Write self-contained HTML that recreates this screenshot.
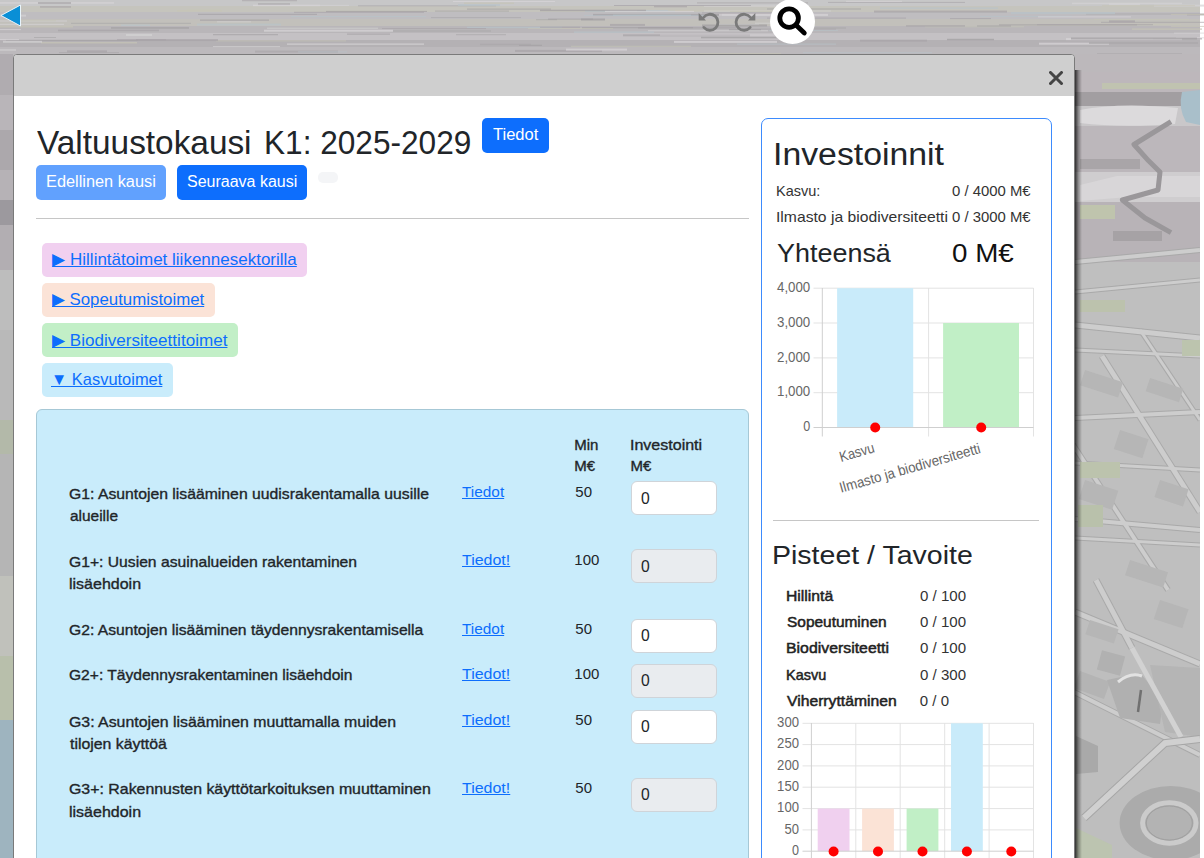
<!DOCTYPE html>
<html><head><meta charset="utf-8">
<style>
*{box-sizing:border-box;margin:0;padding:0}
html,body{width:1204px;height:858px;overflow:hidden}
body{font-family:"Liberation Sans",sans-serif;color:#212529;position:relative;background:#b4b2b4}
.a{position:absolute;white-space:nowrap}
.tx{position:absolute;white-space:nowrap;line-height:1}
#map{position:absolute;left:0;top:0;width:1204px;height:858px}
#modal{position:absolute;left:13px;top:54px;width:1062px;height:820px;background:#fff;border:1px solid #7a7a7a;border-radius:4px 4px 0 0;box-shadow:none}
#mhead{position:absolute;left:0;top:0;width:1060px;height:41px;background:#cfcfcf;border-radius:3px 3px 0 0}
.btn{position:absolute;border-radius:5px}
.acc{position:absolute;left:42px;height:34px;border-radius:5px}
#tbl{position:absolute;left:36px;top:409px;width:713px;height:470px;background:#c9ecfb;border:1px solid #a6c8d6;border-radius:6px}
.inp{position:absolute;left:631px;width:86px;height:34.3px;background:#fff;border:1px solid #cfd4d9;border-radius:6px}
.inp.d{background:#e9ecef}
.inp span{position:absolute;left:10px;top:7px;font-size:15px;line-height:20px;color:#212529}
#panel{position:absolute;left:761px;top:118px;width:291px;height:760px;border:1px solid #3d8bfd;border-radius:7px}
svg.ov{position:absolute;left:0;top:0}
</style></head><body>
<svg style="position:absolute;left:0;top:0" width="1204" height="858" viewBox="0 0 1204 858">
<defs><clipPath id="rc"><rect x="1075" y="54" width="125" height="804"/></clipPath></defs>
<rect x="0" y="0" width="1204" height="858" fill="#fff"/>
<rect x="0" y="0" width="1200" height="858" fill="#bdbbbd"/>
<rect x="0" y="0" width="1200" height="6" fill="#c7c7c8"/>
<rect x="0" y="6" width="1200" height="6" fill="#c5c4bd"/>
<rect x="0" y="12" width="1200" height="7" fill="#bfbdc0"/>
<rect x="0" y="19" width="1200" height="7" fill="#c2c0bb"/>
<rect x="0" y="26" width="1200" height="7" fill="#b9b6b9"/>
<rect x="0" y="33" width="1200" height="7" fill="#c4c1c4"/>
<rect x="0" y="40" width="1200" height="7" fill="#b4b1b4"/>
<rect x="0" y="47" width="1200" height="7" fill="#bcb9bc"/>
<rect x="515" y="49.9" width="87" height="2" fill="#a6a3a6" opacity="0.7"/>
<rect x="585" y="10.0" width="90" height="2" fill="#b8c3c9" opacity="0.7"/>
<rect x="717" y="24.1" width="42" height="1" fill="#d4d3d4" opacity="0.7"/>
<rect x="623" y="34.3" width="127" height="2" fill="#a6a3a6" opacity="0.7"/>
<rect x="767" y="8.5" width="94" height="1" fill="#9f9c9f" opacity="0.7"/>
<rect x="610" y="10.3" width="27" height="1" fill="#d8d6d8" opacity="0.7"/>
<rect x="-12" y="23.8" width="76" height="1" fill="#d8d6d8" opacity="0.7"/>
<rect x="242" y="0.2" width="55" height="1" fill="#a6a3a6" opacity="0.7"/>
<rect x="769" y="29.8" width="69" height="1" fill="#b8c3c9" opacity="0.7"/>
<rect x="267" y="27.7" width="111" height="1" fill="#d4d3d4" opacity="0.7"/>
<rect x="654" y="5.8" width="33" height="1.5" fill="#a6a3a6" opacity="0.7"/>
<rect x="34" y="37.0" width="22" height="1" fill="#aaa7aa" opacity="0.7"/>
<rect x="1109" y="20.3" width="26" height="2" fill="#a6a3a6" opacity="0.7"/>
<rect x="41" y="42.0" width="96" height="1.5" fill="#c6c5b6" opacity="0.7"/>
<rect x="59" y="52.1" width="60" height="1" fill="#aaa7aa" opacity="0.7"/>
<rect x="258" y="3.2" width="32" height="2" fill="#aaa7aa" opacity="0.7"/>
<rect x="803" y="27.5" width="43" height="1" fill="#a6a3a6" opacity="0.7"/>
<rect x="755" y="22.7" width="34" height="1" fill="#d4d3d4" opacity="0.7"/>
<rect x="287" y="43.4" width="137" height="1.5" fill="#d4d3d4" opacity="0.7"/>
<rect x="213" y="46.1" width="67" height="1" fill="#d4d3d4" opacity="0.7"/>
<rect x="1187" y="13.9" width="46" height="1.5" fill="#9f9c9f" opacity="0.7"/>
<rect x="320" y="4.9" width="29" height="1" fill="#d4d3d4" opacity="0.7"/>
<rect x="702" y="24.5" width="65" height="2" fill="#9f9c9f" opacity="0.7"/>
<rect x="668" y="9.9" width="124" height="1" fill="#c6c5b6" opacity="0.7"/>
<rect x="1086" y="13.5" width="118" height="1" fill="#aaa7aa" opacity="0.7"/>
<rect x="874" y="10.6" width="133" height="2" fill="#a6a3a6" opacity="0.7"/>
<rect x="704" y="5.6" width="71" height="1" fill="#d8d6d8" opacity="0.7"/>
<rect x="1153" y="38.0" width="49" height="1.5" fill="#a6a3a6" opacity="0.7"/>
<rect x="980" y="15.8" width="92" height="1" fill="#b8c3c9" opacity="0.7"/>
<rect x="1171" y="25.9" width="35" height="1" fill="#c6c5b6" opacity="0.7"/>
<rect x="216" y="40.4" width="130" height="1" fill="#c6c5b6" opacity="0.7"/>
<rect x="464" y="2.5" width="50" height="1.5" fill="#c6c5b6" opacity="0.7"/>
<rect x="614" y="5.0" width="137" height="1" fill="#a6a3a6" opacity="0.7"/>
<rect x="1176" y="37.3" width="99" height="1" fill="#d8d6d8" opacity="0.7"/>
<rect x="-6" y="49.2" width="22" height="1.5" fill="#d4d3d4" opacity="0.7"/>
<rect x="-23" y="26.0" width="96" height="1.5" fill="#c6c5b6" opacity="0.7"/>
<rect x="121" y="24.5" width="29" height="1.5" fill="#b8c3c9" opacity="0.7"/>
<rect x="6" y="39.8" width="132" height="1" fill="#9f9c9f" opacity="0.7"/>
<rect x="1154" y="4.6" width="61" height="2" fill="#d4d3d4" opacity="0.7"/>
<rect x="1039" y="42.7" width="70" height="2" fill="#d8d6d8" opacity="0.7"/>
<rect x="-32" y="20.5" width="99" height="1" fill="#d8d6d8" opacity="0.7"/>
<rect x="40" y="6.2" width="31" height="1.5" fill="#a6a3a6" opacity="0.7"/>
<rect x="860" y="39.7" width="67" height="2" fill="#a6a3a6" opacity="0.7"/>
<rect x="528" y="28.0" width="85" height="1" fill="#c6c5b6" opacity="0.7"/>
<rect x="702" y="12.4" width="78" height="1" fill="#a6a3a6" opacity="0.7"/>
<rect x="925" y="26.3" width="99" height="1" fill="#c6c5b6" opacity="0.7"/>
<rect x="326" y="10.9" width="101" height="1" fill="#9f9c9f" opacity="0.7"/>
<rect x="1082" y="23.9" width="99" height="1" fill="#c6c5b6" opacity="0.7"/>
<rect x="456" y="34.2" width="50" height="1" fill="#aaa7aa" opacity="0.7"/>
<rect x="431" y="17.1" width="90" height="1" fill="#aaa7aa" opacity="0.7"/>
<rect x="571" y="45.8" width="120" height="1" fill="#c6c5b6" opacity="0.7"/>
<rect x="977" y="25.5" width="34" height="1" fill="#9f9c9f" opacity="0.7"/>
<rect x="467" y="26.7" width="95" height="1.5" fill="#b8c3c9" opacity="0.7"/>
<rect x="999" y="24.4" width="138" height="1" fill="#9f9c9f" opacity="0.7"/>
<rect x="-11" y="2.2" width="125" height="1.5" fill="#d8d6d8" opacity="0.7"/>
<rect x="393" y="30.5" width="98" height="1" fill="#a6a3a6" opacity="0.7"/>
<rect x="519" y="44.8" width="23" height="1" fill="#9f9c9f" opacity="0.7"/>
<rect x="126" y="34.0" width="26" height="2" fill="#d4d3d4" opacity="0.7"/>
<rect x="737" y="43.6" width="99" height="1" fill="#b8c3c9" opacity="0.7"/>
<rect x="198" y="13.8" width="119" height="1" fill="#9f9c9f" opacity="0.7"/>
<rect x="540" y="9.7" width="106" height="1.5" fill="#9f9c9f" opacity="0.7"/>
<rect x="382" y="28.1" width="104" height="1" fill="#a6a3a6" opacity="0.7"/>
<rect x="1011" y="12.1" width="104" height="2" fill="#b8c3c9" opacity="0.7"/>
<rect x="435" y="10.6" width="74" height="1" fill="#a6a3a6" opacity="0.7"/>
<rect x="638" y="27.1" width="98" height="1.5" fill="#a6a3a6" opacity="0.7"/>
<rect x="358" y="5.3" width="138" height="1" fill="#aaa7aa" opacity="0.7"/>
<rect x="253" y="4.7" width="67" height="1.5" fill="#d8d6d8" opacity="0.7"/>
<rect x="1171" y="14.1" width="132" height="1" fill="#c6c5b6" opacity="0.7"/>
<rect x="581" y="18.5" width="24" height="2" fill="#9f9c9f" opacity="0.7"/>
<rect x="294" y="11.8" width="130" height="1" fill="#a6a3a6" opacity="0.7"/>
<rect x="950" y="18.1" width="41" height="1" fill="#a6a3a6" opacity="0.7"/>
<rect x="136" y="39.1" width="82" height="2" fill="#a6a3a6" opacity="0.7"/>
<rect x="674" y="40.9" width="103" height="2" fill="#d8d6d8" opacity="0.7"/>
<rect x="648" y="30.3" width="120" height="1" fill="#d8d6d8" opacity="0.7"/>
<rect x="593" y="13.9" width="129" height="2" fill="#9f9c9f" opacity="0.7"/>
<rect x="1038" y="16.4" width="93" height="1" fill="#d8d6d8" opacity="0.7"/>
<rect x="605" y="10.9" width="89" height="1" fill="#d8d6d8" opacity="0.7"/>
<rect x="-44" y="29.1" width="65" height="1" fill="#d8d6d8" opacity="0.7"/>
<rect x="1097" y="53.4" width="85" height="1" fill="#a6a3a6" opacity="0.7"/>
<rect x="67" y="50.3" width="40" height="2" fill="#a6a3a6" opacity="0.7"/>
<rect x="1101" y="21.8" width="116" height="1" fill="#a6a3a6" opacity="0.7"/>
<rect x="566" y="48.6" width="61" height="2" fill="#d8d6d8" opacity="0.7"/>
<rect x="347" y="33.4" width="43" height="1.5" fill="#aaa7aa" opacity="0.7"/>
<rect x="828" y="1.9" width="137" height="1" fill="#aaa7aa" opacity="0.7"/>
<rect x="-35" y="39.1" width="54" height="1" fill="#d8d6d8" opacity="0.7"/>
<rect x="574" y="31.4" width="80" height="1.5" fill="#b8c3c9" opacity="0.7"/>
<rect x="197" y="23.6" width="84" height="2" fill="#b8c3c9" opacity="0.7"/>
<rect x="467" y="8.6" width="84" height="1" fill="#9f9c9f" opacity="0.7"/>
<rect x="739" y="28.6" width="97" height="1" fill="#aaa7aa" opacity="0.7"/>
<rect x="1094" y="18.8" width="95" height="1" fill="#c6c5b6" opacity="0.7"/>
<rect x="704" y="10.5" width="127" height="1" fill="#d4d3d4" opacity="0.7"/>
<rect x="117" y="39.2" width="49" height="1.5" fill="#a6a3a6" opacity="0.7"/>
<rect x="71" y="22.8" width="120" height="1" fill="#aaa7aa" opacity="0.7"/>
<rect x="453" y="1.0" width="102" height="1" fill="#d8d6d8" opacity="0.7"/>
<rect x="803" y="52.3" width="129" height="1" fill="#b8c3c9" opacity="0.7"/>
<rect x="582" y="27.2" width="111" height="1" fill="#9f9c9f" opacity="0.7"/>
<rect x="38" y="2.0" width="33" height="2" fill="#aaa7aa" opacity="0.7"/>
<rect x="187" y="9.3" width="34" height="1" fill="#c6c5b6" opacity="0.7"/>
<rect x="1109" y="3.3" width="31" height="2" fill="#d4d3d4" opacity="0.7"/>
<rect x="906" y="25.2" width="59" height="1.5" fill="#a6a3a6" opacity="0.7"/>
<rect x="213" y="34.2" width="65" height="1" fill="#9f9c9f" opacity="0.7"/>
<rect x="200" y="19.4" width="69" height="1.5" fill="#a6a3a6" opacity="0.7"/>
<rect x="1102" y="5.1" width="93" height="1" fill="#c6c5b6" opacity="0.7"/>
<rect x="1066" y="38.1" width="116" height="2" fill="#d8d6d8" opacity="0.7"/>
<rect x="700" y="53.1" width="81" height="1.5" fill="#c6c5b6" opacity="0.7"/>
<rect x="1089" y="42.0" width="109" height="2" fill="#aaa7aa" opacity="0.7"/>
<rect x="1071" y="37.5" width="126" height="2" fill="#9f9c9f" opacity="0.7"/>
<rect x="177" y="10.0" width="45" height="1.5" fill="#c6c5b6" opacity="0.7"/>
<rect x="536" y="19.2" width="21" height="1" fill="#aaa7aa" opacity="0.7"/>
<rect x="291" y="16.1" width="135" height="1" fill="#b8c3c9" opacity="0.7"/>
<rect x="458" y="4.1" width="42" height="2" fill="#b8c3c9" opacity="0.7"/>
<rect x="217" y="21.4" width="34" height="1" fill="#d4d3d4" opacity="0.7"/>
<rect x="719" y="13.9" width="109" height="2" fill="#d8d6d8" opacity="0.7"/>
<rect x="13" y="20.3" width="43" height="1" fill="#c6c5b6" opacity="0.7"/>
<rect x="264" y="29.7" width="129" height="2" fill="#d8d6d8" opacity="0.7"/>
<rect x="660" y="34.5" width="139" height="1" fill="#d8d6d8" opacity="0.7"/>
<rect x="697" y="2.4" width="111" height="1" fill="#a6a3a6" opacity="0.7"/>
<rect x="540" y="26.8" width="40" height="1" fill="#a6a3a6" opacity="0.7"/>
<rect x="1132" y="28.4" width="70" height="1.5" fill="#c6c5b6" opacity="0.7"/>
<rect x="613" y="14.6" width="78" height="1.5" fill="#b8c3c9" opacity="0.7"/>
<rect x="846" y="0.8" width="56" height="1" fill="#d8d6d8" opacity="0.7"/>
<rect x="3" y="40.8" width="39" height="2" fill="#d4d3d4" opacity="0.7"/>
<rect x="1072" y="2.7" width="110" height="1.5" fill="#d4d3d4" opacity="0.7"/>
<rect x="947" y="38.8" width="47" height="1.5" fill="#9f9c9f" opacity="0.7"/>
<rect x="255" y="50.6" width="83" height="2" fill="#aaa7aa" opacity="0.7"/>
<rect x="1174" y="32.6" width="118" height="1" fill="#d4d3d4" opacity="0.7"/>
<rect x="730" y="11.0" width="75" height="1" fill="#c6c5b6" opacity="0.7"/>
<rect x="610" y="23.9" width="35" height="2" fill="#a6a3a6" opacity="0.7"/>
<rect x="701" y="36.8" width="97" height="1.5" fill="#9f9c9f" opacity="0.7"/>
<rect x="880" y="7.4" width="118" height="1.5" fill="#b8c3c9" opacity="0.7"/>
<rect x="111" y="27.2" width="78" height="1.5" fill="#9f9c9f" opacity="0.7"/>
<rect x="584" y="14.8" width="122" height="1" fill="#b8c3c9" opacity="0.7"/>
<rect x="298" y="51.4" width="49" height="1" fill="#b8c3c9" opacity="0.7"/>
<rect x="-1" y="14.6" width="27" height="2" fill="#d4d3d4" opacity="0.7"/>
<rect x="729" y="29.2" width="32" height="1" fill="#9f9c9f" opacity="0.7"/>
<rect x="58" y="29.7" width="101" height="1.5" fill="#a6a3a6" opacity="0.7"/>
<rect x="548" y="18.6" width="45" height="1" fill="#9f9c9f" opacity="0.7"/>
<rect x="1037" y="24.2" width="116" height="1" fill="#a6a3a6" opacity="0.7"/>
<rect x="480" y="43.7" width="51" height="1.5" fill="#aaa7aa" opacity="0.7"/>
<rect x="767" y="17.6" width="139" height="1" fill="#a6a3a6" opacity="0.7"/>
<rect x="0" y="54" width="13" height="41" fill="#b0acb0"/>
<rect x="0" y="95" width="13" height="35" fill="#b9b5b9"/>
<rect x="0" y="130" width="13" height="40" fill="#aca8ac"/>
<rect x="0" y="170" width="13" height="30" fill="#b6b2b6"/>
<rect x="0" y="200" width="13" height="25" fill="#9c999e"/>
<rect x="0" y="225" width="13" height="45" fill="#b2aeb2"/>
<rect x="0" y="270" width="13" height="60" fill="#bdbdbd"/>
<rect x="0" y="330" width="13" height="90" fill="#b9b9b9"/>
<rect x="0" y="420" width="13" height="34" fill="#b3b9a9"/>
<rect x="0" y="454" width="13" height="122" fill="#b5b5b5"/>
<rect x="0" y="576" width="13" height="80" fill="#c0c1bb"/>
<rect x="0" y="656" width="13" height="64" fill="#b8bfab"/>
<rect x="0" y="720" width="13" height="138" fill="#9eb4bf"/>
<g clip-path="url(#rc)">
<rect x="1075" y="54" width="125" height="18" fill="#bcb8bb"/>
<rect x="1075" y="72" width="125" height="20" fill="#bdb7bb"/>
<rect x="1075" y="92" width="125" height="14" fill="#a29ea1"/>
<rect x="1075" y="106" width="125" height="20" fill="#c9c7c9"/>
<rect x="1075" y="126" width="125" height="46" fill="#bcb7bb"/>
<rect x="1075" y="172" width="125" height="30" fill="#cfcdcf"/>
<rect x="1075" y="202" width="125" height="60" fill="#b8b3b7"/>
<rect x="1075" y="262" width="125" height="58" fill="#bfbfbf"/>
<rect x="1075" y="320" width="125" height="280" fill="#bfbfbf"/>
<rect x="1075" y="600" width="125" height="258" fill="#bebebe"/>
<path d="M1080 110 Q1120 102 1178 108 L1175 124 Q1120 128 1080 123 Z" fill="#dcdadc"/>
<rect x="1102" y="83" width="98" height="6" fill="#c0c3b0"/>
<path d="M1182 92 L1200 90 L1200 125 L1186 122 Q1178 108 1182 92 Z" fill="#a9bfca"/>
<path d="M1080 185 L1117 176 L1200 176 L1200 197 L1129 197 L1080 201 Z" fill="#d8d6d8"/>
<rect x="1080" y="205" width="35" height="14" fill="#bfc4ad"/>
<path d="M1171 121.6 L1134 144.5 L1148.6 160.8 L1160 172 L1158 190 L1122.4 200 L1145 218 L1171 232.6" fill="none" stroke="#9a979a" stroke-width="5" stroke-linejoin="round"/>
<rect x="1080" y="159" width="60" height="10" fill="#a9a5a8"/>
<path d="M1113 231 L1162 231 L1162 241 L1113 241 Z" fill="#a6a2a5"/>
<line x1="1075" y1="262" x2="1200" y2="250" stroke="#a9a9a9" stroke-width="6"/>
<line x1="1075" y1="292" x2="1200" y2="280" stroke="#a9a9a9" stroke-width="5"/>
<line x1="1075" y1="325" x2="1200" y2="338" stroke="#a9a9a9" stroke-width="7"/>
<line x1="1075" y1="350" x2="1200" y2="356" stroke="#a9a9a9" stroke-width="5"/>
<line x1="1102" y1="356" x2="1200" y2="512" stroke="#a9a9a9" stroke-width="7"/>
<line x1="1070" y1="440" x2="1168" y2="590" stroke="#a9a9a9" stroke-width="6"/>
<line x1="1075" y1="418" x2="1200" y2="412" stroke="#a9a9a9" stroke-width="6"/>
<line x1="1075" y1="463" x2="1200" y2="470" stroke="#a9a9a9" stroke-width="5"/>
<line x1="1075" y1="519" x2="1200" y2="530" stroke="#a9a9a9" stroke-width="6"/>
<line x1="1075" y1="538" x2="1200" y2="545" stroke="#a9a9a9" stroke-width="5"/>
<line x1="1140" y1="330" x2="1200" y2="420" stroke="#a9a9a9" stroke-width="5"/>
<line x1="1075" y1="612" x2="1200" y2="664" stroke="#a9a9a9" stroke-width="7"/>
<line x1="1096" y1="580" x2="1132" y2="648" stroke="#a9a9a9" stroke-width="7"/>
<line x1="1070" y1="690" x2="1200" y2="755" stroke="#a9a9a9" stroke-width="6"/>
<line x1="1075" y1="262" x2="1200" y2="250" stroke="#cdcdcd" stroke-width="4"/>
<line x1="1075" y1="292" x2="1200" y2="280" stroke="#cdcdcd" stroke-width="3"/>
<line x1="1075" y1="325" x2="1200" y2="338" stroke="#cdcdcd" stroke-width="5"/>
<line x1="1075" y1="350" x2="1200" y2="356" stroke="#cdcdcd" stroke-width="3"/>
<line x1="1102" y1="356" x2="1200" y2="512" stroke="#cdcdcd" stroke-width="5"/>
<line x1="1070" y1="440" x2="1168" y2="590" stroke="#cdcdcd" stroke-width="4"/>
<line x1="1075" y1="418" x2="1200" y2="412" stroke="#cdcdcd" stroke-width="4"/>
<line x1="1075" y1="463" x2="1200" y2="470" stroke="#cdcdcd" stroke-width="3"/>
<line x1="1075" y1="519" x2="1200" y2="530" stroke="#cdcdcd" stroke-width="4"/>
<line x1="1075" y1="538" x2="1200" y2="545" stroke="#cdcdcd" stroke-width="3"/>
<line x1="1140" y1="330" x2="1200" y2="420" stroke="#cdcdcd" stroke-width="3"/>
<line x1="1075" y1="612" x2="1200" y2="664" stroke="#cdcdcd" stroke-width="5"/>
<line x1="1096" y1="580" x2="1132" y2="648" stroke="#cdcdcd" stroke-width="5"/>
<line x1="1070" y1="690" x2="1200" y2="755" stroke="#cdcdcd" stroke-width="4"/>
<rect x="1085" y="370" width="40" height="16" fill="#b6b6b6" transform="rotate(18 1085 370)"/>
<rect x="1150" y="378" width="35" height="14" fill="#b6b6b6" transform="rotate(18 1150 378)"/>
<rect x="1120" y="430" width="30" height="20" fill="#b6b6b6" transform="rotate(18 1120 430)"/>
<rect x="1160" y="480" width="30" height="18" fill="#b6b6b6" transform="rotate(18 1160 480)"/>
<rect x="1085" y="480" width="35" height="20" fill="#b6b6b6" transform="rotate(18 1085 480)"/>
<rect x="1130" y="560" width="40" height="16" fill="#b6b6b6" transform="rotate(18 1130 560)"/>
<rect x="1090" y="620" width="30" height="15" fill="#b6b6b6" transform="rotate(18 1090 620)"/>
<rect x="1160" y="600" width="30" height="20" fill="#b6b6b6" transform="rotate(18 1160 600)"/>
<rect x="1080" y="300" width="45" height="12" fill="#bcc2ad"/>
<rect x="1080" y="462" width="40" height="16" fill="#bcc3ad"/>
<rect x="1078" y="505" width="25" height="22" fill="#b9c1ab"/>
<rect x="1182" y="340" width="18" height="16" fill="#bcc4ae"/>
<path d="M1076 736 L1098 746 L1098 772 L1076 774 Z" fill="#a9a9a9"/>
<rect x="1099" y="653" width="24" height="20" fill="#b1b1b1" transform="rotate(15 1111 663)"/>
<rect x="1076" y="676" width="32" height="18" fill="#b4b4b4" transform="rotate(20 1092 685)"/>
<path d="M1107 680 L1140 673 L1163 700 L1160 724 L1120 718 Z" fill="#b0b0b0"/>
<path d="M1118 682 Q1130 672 1142 676" fill="none" stroke="#e2e2e2" stroke-width="3"/>
<path d="M1141 690 L1138 712" stroke="#707070" stroke-width="2.5"/>
<path d="M1150 665 L1200 668 L1200 737 L1165 732 Z" fill="#b5b5b5"/>
<path d="M1132 648 L1181 737" stroke="#d2d2d2" stroke-width="5"/>
<path d="M1084 818 L1165 743 L1200 739" fill="none" stroke="#a6a6a6" stroke-width="8"/>
<path d="M1084 818 L1165 743 L1200 739" fill="none" stroke="#d0d0d0" stroke-width="6"/>
<path d="M1076 828 L1112 845 L1112 858 L1076 858 Z" fill="#bcc4b0"/>
<ellipse cx="1170.6" cy="823" rx="51" ry="37" fill="#ababab"/>
<ellipse cx="1169.3" cy="823" rx="26.7" ry="20.3" fill="none" stroke="#cbcbcb" stroke-width="5"/>
<ellipse cx="1169.3" cy="823" rx="23" ry="17" fill="#b3b3b3" stroke="#a0a0a0" stroke-width="1"/>
</g>
</svg>
<div style="position:absolute;left:1075px;top:70px;width:7px;height:788px;background:linear-gradient(to right,rgba(0,0,0,.75),rgba(0,0,0,.3) 50%,rgba(0,0,0,0))"></div>

<!-- top icons -->
<svg class="a" style="left:0;top:4px" width="24" height="24" viewBox="0 0 24 24"><path d="M1 11.5 L20.5 1 L20.5 22 Z" fill="#0a8fd6" stroke="#e8f4fb" stroke-width="1"/></svg>
<svg class="a" style="left:696px;top:10px" width="24" height="24" viewBox="0 0 24 24"><path d="M7.5 7.5 A8 8 0 1 1 7.84 17.4" fill="none" stroke="#7a7a7a" stroke-width="2.8" stroke-linecap="round"/><path d="M2.7 3 L2.7 10.5 L10 10.5 Z" fill="#7a7a7a"/></svg>
<svg class="a" style="left:733.8px;top:10px;transform:scaleX(-1)" width="24" height="24" viewBox="0 0 24 24"><path d="M7.5 7.5 A8 8 0 1 1 7.84 17.4" fill="none" stroke="#7a7a7a" stroke-width="2.8" stroke-linecap="round"/><path d="M2.7 3 L2.7 10.5 L10 10.5 Z" fill="#7a7a7a"/></svg>
<svg class="a" style="left:770px;top:-1px" width="45" height="45" viewBox="0 0 45 45"><circle cx="22.5" cy="22.5" r="22.5" fill="#fff"/><circle cx="19.1" cy="19.1" r="9.3" fill="none" stroke="#000" stroke-width="4.8"/><path d="M26.5 26.5 L34.3 34" stroke="#000" stroke-width="4.8" stroke-linecap="round"/></svg>

<div id="modal">
  <div id="mhead"></div>
  <svg class="a" style="left:1035px;top:16px" width="15" height="15" viewBox="0 0 15 15"><path d="M1.5 1.5 L12.5 12.5 M12.5 1.5 L1.5 12.5" stroke="#444" stroke-width="3" stroke-linecap="round"/></svg>
</div>

<div class="btn" style="left:482px;top:118px;width:67px;height:35px;background:#0d6efd"></div>
<div class="btn" style="left:36px;top:165px;width:130px;height:35px;background:#61a1fe"></div>
<div class="btn" style="left:177px;top:165px;width:130px;height:35px;background:#0d6efd"></div>
<div class="a" style="left:318px;top:172px;width:20px;height:11px;background:#f4f5f7;border-radius:5px"></div>
<div class="a" style="left:36px;top:218px;width:713px;height:1px;background:#c6c6c6"></div>

<div class="acc" style="top:243px;width:265px;background:#f1d0f0"></div>
<div class="acc" style="top:283px;width:173px;background:#fbe3d7"></div>
<div class="acc" style="top:323px;width:196px;background:#c2efc7"></div>
<div class="acc" style="top:363px;width:131px;background:#c9ecfb"></div>

<div id="tbl"></div>
<div class="inp" style="top:481px"></div>
<div class="inp d" style="top:549px"></div>
<div class="inp" style="top:618.5px"></div>
<div class="inp d" style="top:663.5px"></div>
<div class="inp" style="top:709.5px"></div>
<div class="inp d" style="top:777.5px"></div>

<div id="panel"></div>
<div class="a" style="left:773px;top:520px;width:266px;height:1px;background:#c6c6c6"></div>
<svg class="ov" width="1204" height="858" viewBox="0 0 1204 858">
<line x1="813.5" y1="288.2" x2="1033.5" y2="288.2" stroke="#e3e3e3" stroke-width="1"/>
<line x1="813.5" y1="323.0" x2="1033.5" y2="323.0" stroke="#e3e3e3" stroke-width="1"/>
<line x1="813.5" y1="357.9" x2="1033.5" y2="357.9" stroke="#e3e3e3" stroke-width="1"/>
<line x1="813.5" y1="392.7" x2="1033.5" y2="392.7" stroke="#e3e3e3" stroke-width="1"/>
<line x1="928.6" y1="288" x2="928.6" y2="436.5" stroke="#e3e3e3" stroke-width="1"/>
<line x1="1033.5" y1="288" x2="1033.5" y2="436.5" stroke="#e3e3e3" stroke-width="1"/>
<rect x="837.1" y="288.2" width="76.1" height="139.3" fill="#c9ebfa"/>
<rect x="943.1" y="323.0" width="75.9" height="104.5" fill="#c1efc6"/>
<line x1="813.5" y1="427.5" x2="1033.5" y2="427.5" stroke="#cfcfcf" stroke-width="1"/>
<line x1="822.3" y1="288" x2="822.3" y2="436.5" stroke="#cfcfcf" stroke-width="1"/>
<circle cx="875.2" cy="427.5" r="5" fill="#f00"/>
<circle cx="981.2" cy="427.5" r="5" fill="#f00"/>
<text x="810.2" y="291.9" text-anchor="end" font-size="14.8" fill="#666" font-family="Liberation Sans" textLength="33.2" lengthAdjust="spacingAndGlyphs">4,000</text>
<text x="810.2" y="326.7" text-anchor="end" font-size="14.8" fill="#666" font-family="Liberation Sans" textLength="33.2" lengthAdjust="spacingAndGlyphs">3,000</text>
<text x="810.2" y="361.6" text-anchor="end" font-size="14.8" fill="#666" font-family="Liberation Sans" textLength="33.2" lengthAdjust="spacingAndGlyphs">2,000</text>
<text x="810.2" y="396.4" text-anchor="end" font-size="14.8" fill="#666" font-family="Liberation Sans" textLength="33.2" lengthAdjust="spacingAndGlyphs">1,000</text>
<text x="810.2" y="431.2" text-anchor="end" font-size="14.8" fill="#666" font-family="Liberation Sans" textLength="7" lengthAdjust="spacingAndGlyphs">0</text>
<text transform="translate(875.5 452) rotate(-16)" text-anchor="end" font-size="14.5" fill="#666" font-family="Liberation Sans" textLength="36" lengthAdjust="spacingAndGlyphs">Kasvu</text>
<text transform="translate(981.4 452.6) rotate(-16)" text-anchor="end" font-size="14.5" fill="#666" font-family="Liberation Sans" textLength="146" lengthAdjust="spacingAndGlyphs">Ilmasto ja biodiversiteetti</text>
<line x1="802.5" y1="723.3" x2="1033.5" y2="723.3" stroke="#e3e3e3" stroke-width="1"/>
<line x1="802.5" y1="744.6" x2="1033.5" y2="744.6" stroke="#e3e3e3" stroke-width="1"/>
<line x1="802.5" y1="765.9" x2="1033.5" y2="765.9" stroke="#e3e3e3" stroke-width="1"/>
<line x1="802.5" y1="787.2" x2="1033.5" y2="787.2" stroke="#e3e3e3" stroke-width="1"/>
<line x1="802.5" y1="808.6" x2="1033.5" y2="808.6" stroke="#e3e3e3" stroke-width="1"/>
<line x1="802.5" y1="829.9" x2="1033.5" y2="829.9" stroke="#e3e3e3" stroke-width="1"/>
<line x1="855.8" y1="723" x2="855.8" y2="870" stroke="#e3e3e3" stroke-width="1"/>
<line x1="900.2" y1="723" x2="900.2" y2="870" stroke="#e3e3e3" stroke-width="1"/>
<line x1="944.7" y1="723" x2="944.7" y2="870" stroke="#e3e3e3" stroke-width="1"/>
<line x1="989.1" y1="723" x2="989.1" y2="870" stroke="#e3e3e3" stroke-width="1"/>
<line x1="1033.5" y1="723" x2="1033.5" y2="870" stroke="#e3e3e3" stroke-width="1"/>
<rect x="817.7" y="808.6" width="31.8" height="42.6" fill="#f0d0ef"/>
<rect x="862.1" y="808.6" width="31.8" height="42.6" fill="#fbe3d6"/>
<rect x="906.6" y="808.6" width="31.8" height="42.6" fill="#c1efc6"/>
<rect x="951.0" y="723.3" width="31.8" height="127.9" fill="#c9ebfa"/>
<line x1="802.5" y1="851.2" x2="1033.5" y2="851.2" stroke="#cfcfcf" stroke-width="1"/>
<line x1="811.4" y1="723" x2="811.4" y2="870" stroke="#cfcfcf" stroke-width="1"/>
<circle cx="833.6" cy="851.5" r="5" fill="#f00"/>
<circle cx="878.0" cy="851.5" r="5" fill="#f00"/>
<circle cx="922.5" cy="851.5" r="5" fill="#f00"/>
<circle cx="966.9" cy="851.5" r="5" fill="#f00"/>
<circle cx="1011.3" cy="851.5" r="5" fill="#f00"/>
<text x="799" y="726.9" text-anchor="end" font-size="14.8" fill="#666" font-family="Liberation Sans" textLength="21.9" lengthAdjust="spacingAndGlyphs">300</text>
<text x="799" y="748.2" text-anchor="end" font-size="14.8" fill="#666" font-family="Liberation Sans" textLength="21.9" lengthAdjust="spacingAndGlyphs">250</text>
<text x="799" y="769.5" text-anchor="end" font-size="14.8" fill="#666" font-family="Liberation Sans" textLength="21.9" lengthAdjust="spacingAndGlyphs">200</text>
<text x="799" y="790.9" text-anchor="end" font-size="14.8" fill="#666" font-family="Liberation Sans" textLength="21.9" lengthAdjust="spacingAndGlyphs">150</text>
<text x="799" y="812.2" text-anchor="end" font-size="14.8" fill="#666" font-family="Liberation Sans" textLength="21.9" lengthAdjust="spacingAndGlyphs">100</text>
<text x="799" y="833.5" text-anchor="end" font-size="14.8" fill="#666" font-family="Liberation Sans" textLength="14.5" lengthAdjust="spacingAndGlyphs">50</text>
<text x="799" y="854.8" text-anchor="end" font-size="14.8" fill="#666" font-family="Liberation Sans" textLength="7" lengthAdjust="spacingAndGlyphs">0</text>
</svg>

<div class="tx" style="left:36.80px;top:126.05px;font-size:33.5px;color:#212529;transform:scaleX(0.9960);transform-origin:0 0;">Valtuustokausi</div>
<div class="tx" style="left:263.91px;top:126.05px;font-size:33.5px;color:#212529;transform:scaleX(0.9431);transform-origin:0 0;">K1: 2025-2029</div>
<div class="tx" style="left:492.60px;top:127.46px;font-size:16px;color:#fff;transform:scaleX(1.0308);transform-origin:0 0;">Tiedot</div>
<div class="tx" style="left:45.98px;top:174.36px;font-size:16px;color:#fff;transform:scaleX(1.0201);transform-origin:0 0;">Edellinen kausi</div>
<div class="tx" style="left:187.00px;top:174.16px;font-size:16px;color:#fff;">Seuraava kausi</div>
<div class="tx" style="left:52.30px;top:251.41px;font-size:17px;color:#0d6efd;text-decoration:underline;">▶ Hillintätoimet liikennesektorilla</div>
<div class="tx" style="left:52.30px;top:291.41px;font-size:17px;color:#0d6efd;transform:scaleX(0.9898);transform-origin:0 0;text-decoration:underline;">▶ Sopeutumistoimet</div>
<div class="tx" style="left:52.20px;top:331.61px;font-size:17px;color:#0d6efd;transform:scaleX(1.0049);transform-origin:0 0;text-decoration:underline;">▶ Biodiversiteettitoimet</div>
<div class="tx" style="left:51.40px;top:371.41px;font-size:17px;color:#0d6efd;transform:scaleX(0.9674);transform-origin:0 0;text-decoration:underline;">▼ Kasvutoimet</div>
<div class="tx" style="left:574.30px;top:436.70px;font-size:15px;color:#212529;-webkit-text-stroke:0.35px currentColor;">Min</div>
<div class="tx" style="left:574.30px;top:458.30px;font-size:15px;color:#212529;-webkit-text-stroke:0.35px currentColor;">M€</div>
<div class="tx" style="left:630.33px;top:436.70px;font-size:15px;color:#212529;transform:scaleX(1.0679);transform-origin:0 0;-webkit-text-stroke:0.35px currentColor;">Investointi</div>
<div class="tx" style="left:630.40px;top:458.30px;font-size:15px;color:#212529;-webkit-text-stroke:0.35px currentColor;">M€</div>
<div class="tx" style="left:69.00px;top:485.50px;font-size:15px;color:#212529;transform:scaleX(1.0502);transform-origin:0 0;-webkit-text-stroke:0.35px currentColor;">G1: Asuntojen lisääminen uudisrakentamalla uusille</div>
<div class="tx" style="left:69.80px;top:508.10px;font-size:15px;color:#212529;transform:scaleX(1.0290);transform-origin:0 0;-webkit-text-stroke:0.35px currentColor;">alueille</div>
<div class="tx" style="left:462.40px;top:484.00px;font-size:15px;color:#0d6efd;transform:scaleX(1.0247);transform-origin:0 0;text-decoration:underline;">Tiedot</div>
<div class="tx" style="left:575.30px;top:484.00px;font-size:15px;color:#212529;">50</div>
<div class="tx" style="left:69.00px;top:553.70px;font-size:15px;color:#212529;transform:scaleX(1.0452);transform-origin:0 0;-webkit-text-stroke:0.35px currentColor;">G1+: Uusien asuinalueiden rakentaminen</div>
<div class="tx" style="left:68.73px;top:576.30px;font-size:15px;color:#212529;transform:scaleX(1.0663);transform-origin:0 0;-webkit-text-stroke:0.35px currentColor;">lisäehdoin</div>
<div class="tx" style="left:462.40px;top:552.20px;font-size:15px;color:#0d6efd;transform:scaleX(1.0650);transform-origin:0 0;text-decoration:underline;">Tiedot!</div>
<div class="tx" style="left:574.30px;top:552.20px;font-size:15px;color:#212529;">100</div>
<div class="tx" style="left:69.00px;top:622.20px;font-size:15px;color:#212529;transform:scaleX(1.0439);transform-origin:0 0;-webkit-text-stroke:0.35px currentColor;">G2: Asuntojen lisääminen täydennysrakentamisella</div>
<div class="tx" style="left:462.40px;top:620.70px;font-size:15px;color:#0d6efd;transform:scaleX(1.0247);transform-origin:0 0;text-decoration:underline;">Tiedot</div>
<div class="tx" style="left:575.30px;top:620.70px;font-size:15px;color:#212529;">50</div>
<div class="tx" style="left:69.00px;top:667.10px;font-size:15px;color:#212529;transform:scaleX(1.0391);transform-origin:0 0;-webkit-text-stroke:0.35px currentColor;">G2+: Täydennysrakentaminen lisäehdoin</div>
<div class="tx" style="left:462.40px;top:665.60px;font-size:15px;color:#0d6efd;transform:scaleX(1.0650);transform-origin:0 0;text-decoration:underline;">Tiedot!</div>
<div class="tx" style="left:574.30px;top:665.60px;font-size:15px;color:#212529;">100</div>
<div class="tx" style="left:69.00px;top:713.60px;font-size:15px;color:#212529;transform:scaleX(1.0571);transform-origin:0 0;-webkit-text-stroke:0.35px currentColor;">G3: Asuntojen lisääminen muuttamalla muiden</div>
<div class="tx" style="left:69.80px;top:736.20px;font-size:15px;color:#212529;transform:scaleX(1.0554);transform-origin:0 0;-webkit-text-stroke:0.35px currentColor;">tilojen käyttöä</div>
<div class="tx" style="left:462.40px;top:712.10px;font-size:15px;color:#0d6efd;transform:scaleX(1.0650);transform-origin:0 0;text-decoration:underline;">Tiedot!</div>
<div class="tx" style="left:575.30px;top:712.10px;font-size:15px;color:#212529;">50</div>
<div class="tx" style="left:69.00px;top:781.00px;font-size:15px;color:#212529;transform:scaleX(1.0595);transform-origin:0 0;-webkit-text-stroke:0.35px currentColor;">G3+: Rakennusten käyttötarkoituksen muuttaminen</div>
<div class="tx" style="left:68.73px;top:803.60px;font-size:15px;color:#212529;transform:scaleX(1.0663);transform-origin:0 0;-webkit-text-stroke:0.35px currentColor;">lisäehdoin</div>
<div class="tx" style="left:462.40px;top:779.50px;font-size:15px;color:#0d6efd;transform:scaleX(1.0650);transform-origin:0 0;text-decoration:underline;">Tiedot!</div>
<div class="tx" style="left:575.30px;top:779.50px;font-size:15px;color:#212529;">50</div>
<div class="tx" style="left:773.12px;top:138.96px;font-size:31px;color:#212529;transform:scaleX(1.0902);transform-origin:0 0;">Investoinnit</div>
<div class="tx" style="left:775.72px;top:184.27px;font-size:14.8px;color:#333;transform:scaleX(0.9786);transform-origin:0 0;">Kasvu:</div>
<div class="tx" style="left:952.30px;top:184.27px;font-size:14.8px;color:#333;transform:scaleX(1.0061);transform-origin:0 0;">0 / 4000 M€</div>
<div class="tx" style="left:775.64px;top:210.27px;font-size:14.8px;color:#333;transform:scaleX(1.0608);transform-origin:0 0;">Ilmasto ja biodiversiteetti</div>
<div class="tx" style="left:952.30px;top:210.27px;font-size:14.8px;color:#333;transform:scaleX(1.0061);transform-origin:0 0;">0 / 3000 M€</div>
<div class="tx" style="left:776.70px;top:239.99px;font-size:26px;color:#212529;transform:scaleX(1.0362);transform-origin:0 0;">Yhteensä</div>
<div class="tx" style="left:951.73px;top:239.99px;font-size:26px;color:#111;transform:scaleX(1.0673);transform-origin:0 0;">0 M€</div>
<div class="tx" style="left:771.78px;top:542.85px;font-size:25.7px;color:#212529;transform:scaleX(1.1104);transform-origin:0 0;">Pisteet / Tavoite</div>
<div class="tx" style="left:785.75px;top:588.30px;font-size:15px;color:#222;transform:scaleX(1.0476);transform-origin:0 0;-webkit-text-stroke:0.5px currentColor;">Hillintä</div>
<div class="tx" style="left:919.80px;top:588.30px;font-size:15px;color:#333;transform:scaleX(1.0037);transform-origin:0 0;">0 / 100</div>
<div class="tx" style="left:786.80px;top:614.40px;font-size:15px;color:#222;transform:scaleX(1.0291);transform-origin:0 0;-webkit-text-stroke:0.5px currentColor;">Sopeutuminen</div>
<div class="tx" style="left:919.80px;top:614.40px;font-size:15px;color:#333;transform:scaleX(1.0037);transform-origin:0 0;">0 / 100</div>
<div class="tx" style="left:785.74px;top:640.40px;font-size:15px;color:#222;transform:scaleX(1.0560);transform-origin:0 0;-webkit-text-stroke:0.5px currentColor;">Biodiversiteetti</div>
<div class="tx" style="left:919.80px;top:640.40px;font-size:15px;color:#333;transform:scaleX(1.0037);transform-origin:0 0;">0 / 100</div>
<div class="tx" style="left:785.84px;top:666.90px;font-size:15px;color:#222;transform:scaleX(0.9641);transform-origin:0 0;-webkit-text-stroke:0.5px currentColor;">Kasvu</div>
<div class="tx" style="left:919.80px;top:666.90px;font-size:15px;color:#333;transform:scaleX(1.0037);transform-origin:0 0;">0 / 300</div>
<div class="tx" style="left:786.80px;top:693.00px;font-size:15px;color:#222;transform:scaleX(1.0466);transform-origin:0 0;-webkit-text-stroke:0.5px currentColor;">Viherryttäminen</div>
<div class="tx" style="left:919.80px;top:693.00px;font-size:15px;color:#333;">0 / 0</div>
<div class="tx" style="left:640.80px;top:489.81px;font-size:17px;color:#212529;transform:scaleX(0.9222);transform-origin:0 0;">0</div>
<div class="tx" style="left:640.80px;top:557.71px;font-size:17px;color:#212529;transform:scaleX(0.9222);transform-origin:0 0;">0</div>
<div class="tx" style="left:640.80px;top:627.21px;font-size:17px;color:#212529;transform:scaleX(0.9222);transform-origin:0 0;">0</div>
<div class="tx" style="left:640.80px;top:672.31px;font-size:17px;color:#212529;transform:scaleX(0.9222);transform-origin:0 0;">0</div>
<div class="tx" style="left:640.80px;top:718.01px;font-size:17px;color:#212529;transform:scaleX(0.9222);transform-origin:0 0;">0</div>
<div class="tx" style="left:640.80px;top:786.21px;font-size:17px;color:#212529;transform:scaleX(0.9222);transform-origin:0 0;">0</div>
</body></html>
